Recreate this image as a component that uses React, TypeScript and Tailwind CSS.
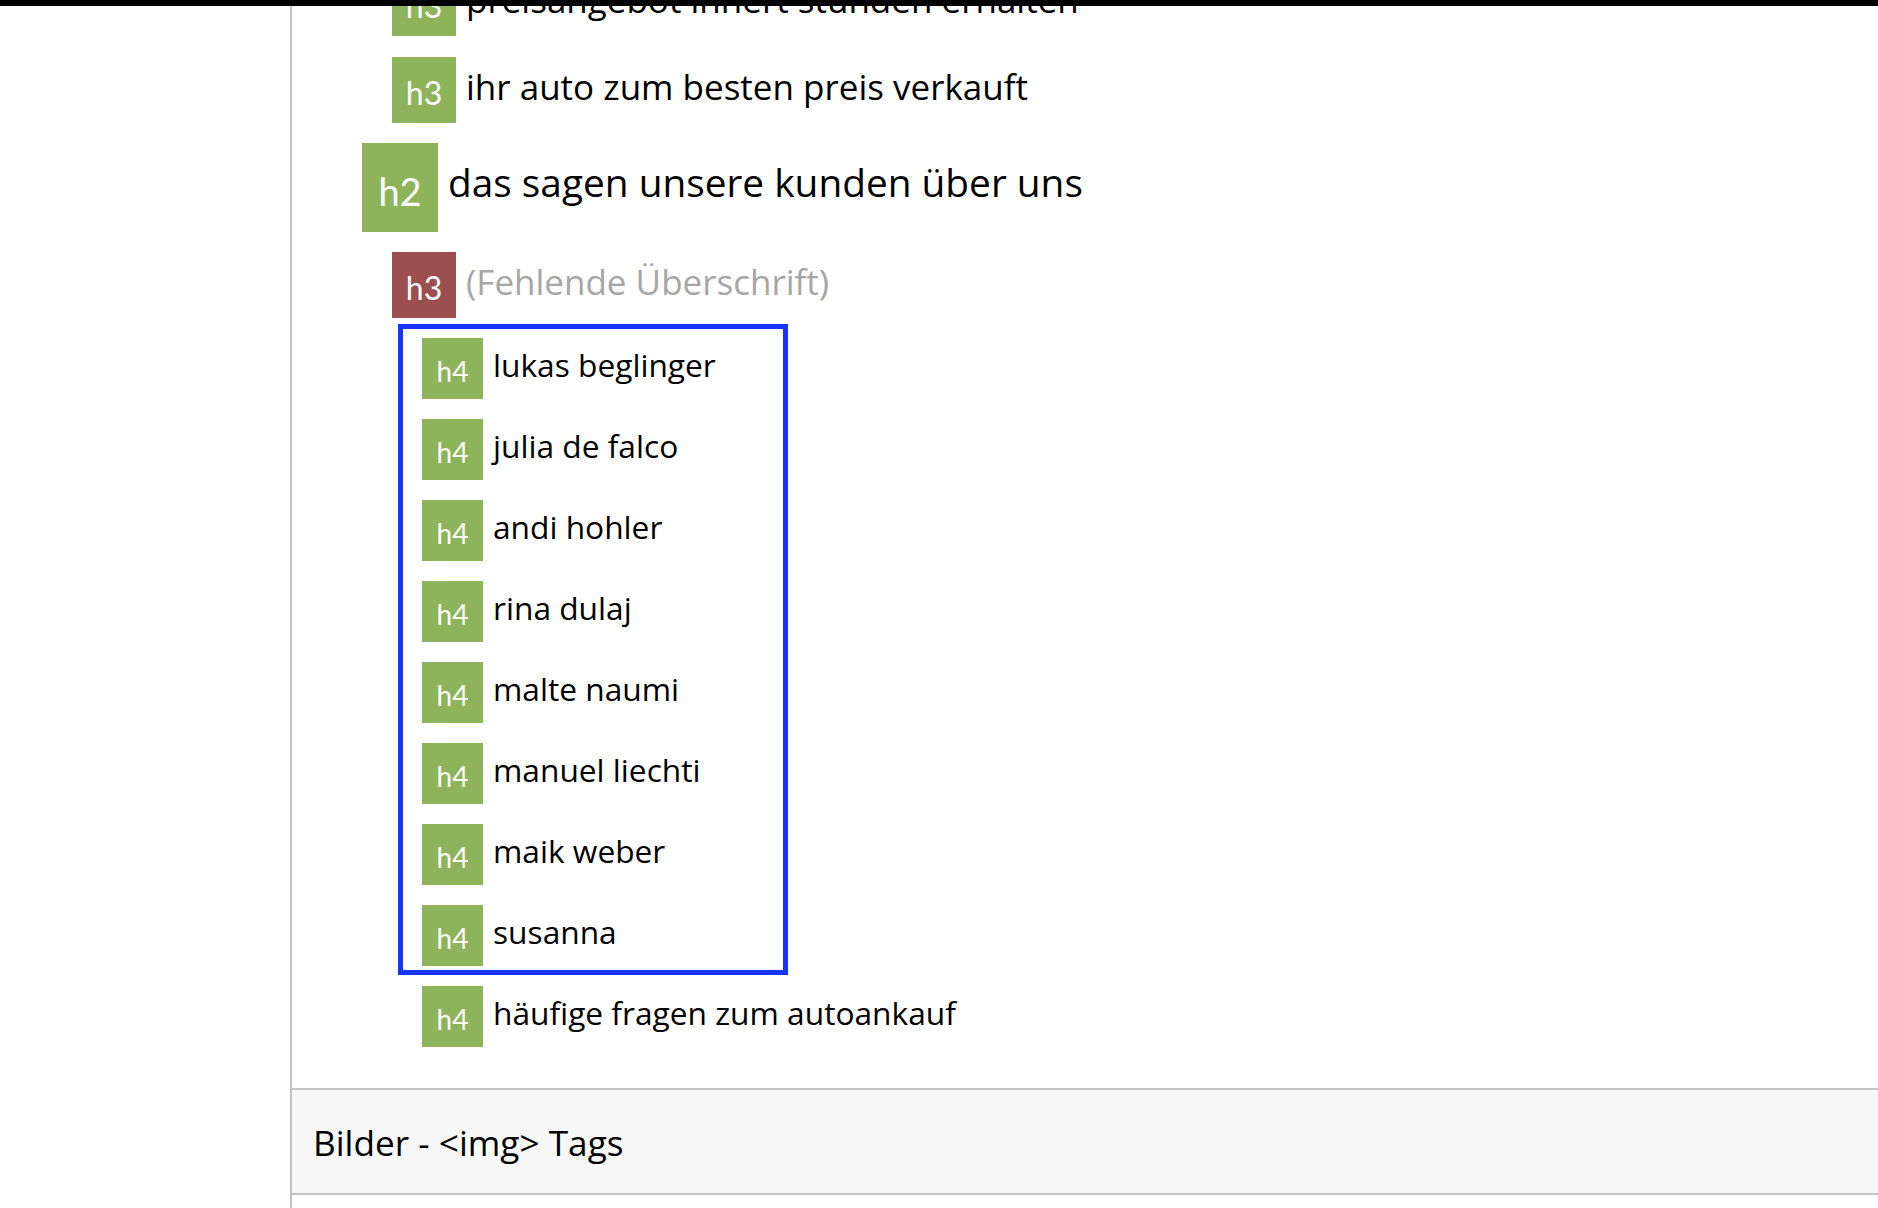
import React from 'react';

type Level = 'h2' | 'h3' | 'h4';

const badgeClass: Record<Level, string> = {
  h2: 'w-[76px] h-[89px] text-[38px] pt-[29px]',
  h3: 'w-[64px] h-[66px] text-[32px] pt-[20px]',
  h4: 'w-[61px] h-[61px] text-[28px] pt-[19px]',
};

const textClass: Record<Level, string> = {
  h2: 'text-[38.8px] mt-[20px]',
  h3: 'text-[35px] mt-[12px]',
  h4: 'text-[31.7px] mt-[11px]',
};

interface HeadingRowProps {
  level: Level;
  text: string;
  missing?: boolean;
  className?: string;
}

const HeadingRow: React.FC<HeadingRowProps> = ({ level, text, missing, className = '' }) => (
  <div className={`flex items-start gap-[10px] ${className}`}>
    <div
      className={`shrink-0 flex justify-center items-start leading-none text-white font-['Lato',sans-serif] ${badgeClass[level]} ${
        missing ? 'bg-[#9b4f4e]' : 'bg-[#8db45b]'
      }`}
    >
      {level}
    </div>
    <span
      className={`leading-none whitespace-nowrap font-['Open_Sans',sans-serif] ${textClass[level]} ${
        missing ? 'text-[#a6a6a6]' : 'text-black'
      }`}
    >
      {text}
    </span>
  </div>
);

const reviewers = [
  'lukas beglinger',
  'julia de falco',
  'andi hohler',
  'rina dulaj',
  'malte naumi',
  'manuel liechti',
  'maik weber',
  'susanna',
];

export default function App() {
  return (
    <div className="relative w-full h-screen overflow-hidden bg-white flex">
      {/* top edge of the window */}
      <div className="absolute top-0 left-0 right-0 h-[6px] bg-black z-10" />

      <div className="w-[290px] shrink-0" />

      <div className="flex-1 border-l-2 border-[#c2c2c2] flex flex-col">
        <div className="flex flex-col mt-[-30px]">
          <HeadingRow level="h3" text="preisangebot innert stunden erhalten" className="ml-[100px]" />
          <HeadingRow level="h3" text="ihr auto zum besten preis verkauft" className="ml-[100px] mt-[21px]" />
          <HeadingRow level="h2" text="das sagen unsere kunden über uns" className="ml-[70px] mt-[20px]" />
          <HeadingRow level="h3" text="(Fehlende Überschrift)" missing className="ml-[100px] mt-[20px]" />

          <div className="ml-[106px] mt-[6px] w-[390px] border-[5px] border-[#1934fa] pt-[9px] pb-[4px] pl-[19px] flex flex-col gap-[20px]">
            {reviewers.map((name) => (
              <HeadingRow key={name} level="h4" text={name} />
            ))}
          </div>

          <HeadingRow level="h4" text="häufige fragen zum autoankauf" className="ml-[130px] mt-[11px]" />
        </div>

        <div className="mt-[41px] h-[107px] shrink-0 border-y-2 border-[#c2c2c2] bg-[#f7f7f7] pl-[21px] pt-[35px]">
          <span className="text-[35.2px] leading-none text-black font-['Open_Sans',sans-serif]">Bilder - &lt;img&gt; Tags</span>
        </div>
      </div>
    </div>
  );
}
